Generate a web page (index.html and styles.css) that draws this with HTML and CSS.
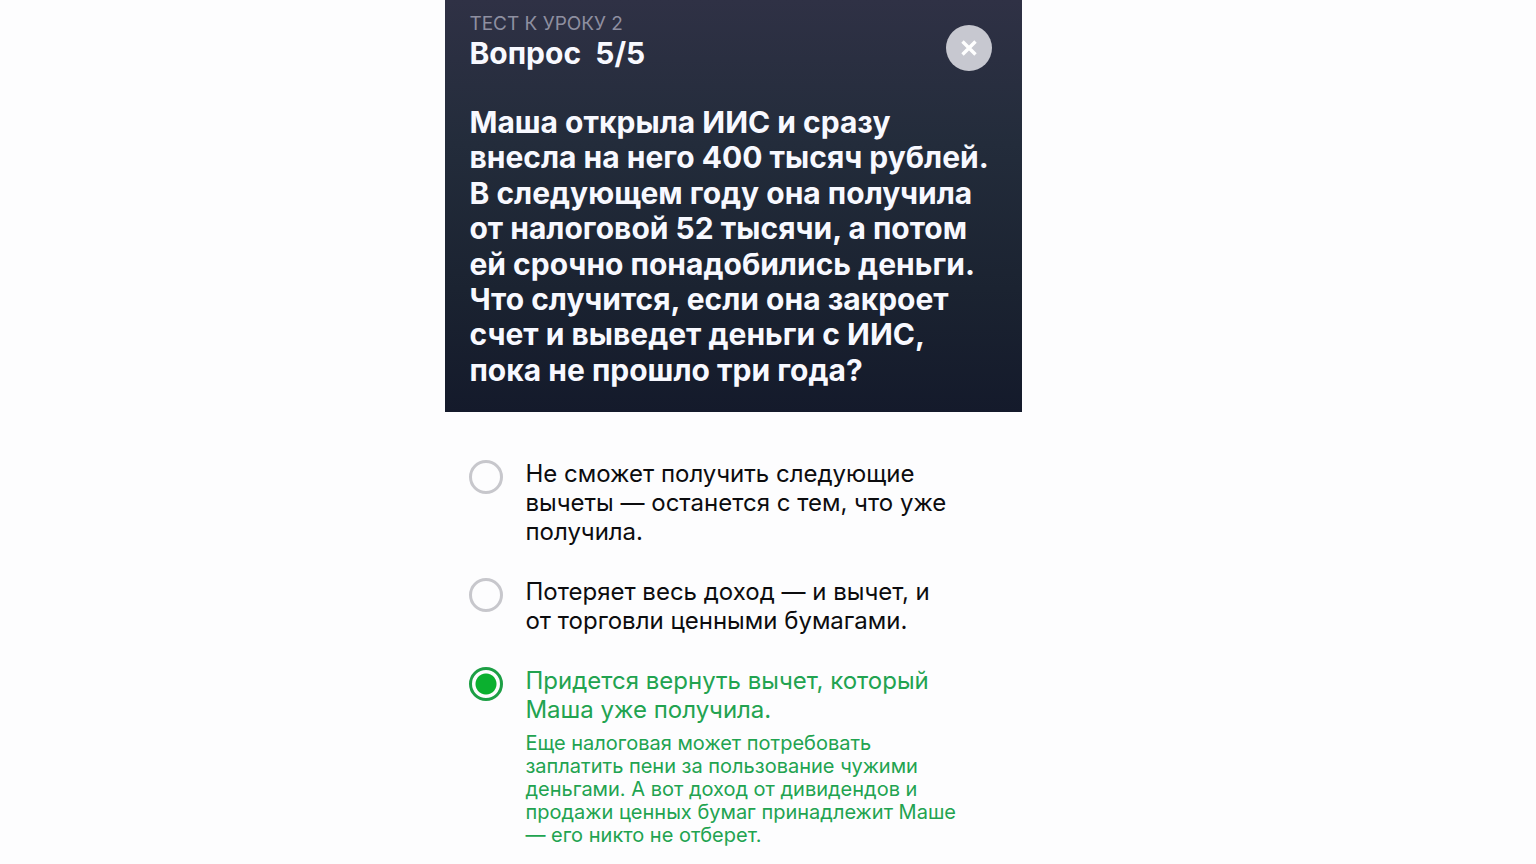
FILE: index.html
```html
<!DOCTYPE html>
<html lang="ru">
<head>
<meta charset="utf-8">
<meta name="viewport" content="width=device-width, initial-scale=1">
<title>Тест к уроку 2</title>
<link rel="stylesheet" href="styles.css">
</head>
<body>
<main class="quiz">
  <header class="quiz-header">
    <div class="topbar">
      <div>
        <p class="lesson">ТЕСТ К УРОКУ 2</p>
        <h1 class="counter">Вопрос&nbsp; 5/5</h1>
      </div>
      <button class="close" type="button" aria-label="Закрыть">
        <svg viewBox="0 0 46 46" width="46" height="46" aria-hidden="true"><path d="M16.5 16.5 29.5 29.5M29.5 16.5 16.5 29.5" fill="none" stroke="#fff" stroke-width="3.4" stroke-linecap="butt"/></svg>
      </button>
    </div>
    <h2 class="question" id="question">Маша открыла ИИС и сразу<br>внесла на него 400 тысяч рублей.<br>В следующем году она получила<br>от налоговой 52 тысячи, а потом<br>ей срочно понадобились деньги.<br>Что случится, если она закроет<br>счет и выведет деньги с ИИС,<br>пока не прошло три года?</h2>
  </header>
  <form class="answers" role="radiogroup" aria-labelledby="question">
    <label class="answer">
      <input class="radio" type="radio" name="answer">
      <span class="text">Не сможет получить следующие<br>вычеты — останется с тем, что уже<br>получила.</span>
    </label>
    <label class="answer">
      <input class="radio" type="radio" name="answer">
      <span class="text">Потеряет весь доход — и вычет, и<br>от торговли ценными бумагами.</span>
    </label>
    <label class="answer correct">
      <input class="radio" type="radio" name="answer" checked>
      <span class="text">Придется вернуть вычет, который<br>Маша уже получила.
        <span class="note">Еще налоговая может потребовать<br>заплатить пени за пользование чужими<br>деньгами. А вот доход от дивидендов и<br>продажи ценных бумаг принадлежит Маше<br>— его никто не отберет.</span>
      </span>
    </label>
  </form>
</main>
</body>
</html>
```
FILE: styles.css
```css
* { box-sizing: border-box; }
body {
  margin: 0;
  background: #fdfdfe;
  color: #0c0c0e;
  font-family: Inter, "Liberation Sans", sans-serif;
}
.quiz {
  max-width: 577px;
  margin-left: 29%;
}
.quiz-header {
  padding: 12px 24px 24px;
  background: linear-gradient(#2f3145, #232c3b 35%, #1b2331 70%, #141a2b);
  color: #f8f9ff;
}
.topbar {
  display: flex;
  justify-content: space-between;
  align-items: flex-end;
  padding-right: 6px;
}
.lesson {
  margin: 0;
  font-size: 19px;
  line-height: 24px;
  color: #8e8fa0;
}
.counter {
  margin: 0;
  font-size: 30px;
  line-height: 35px;
  font-weight: 650;
}
.close {
  width: 46px;
  height: 46px;
  padding: 0;
  border: 0;
  border-radius: 50%;
  background: #c7c8d0;
}
.close svg { display: block; }
.question {
  margin: 34px 0 0;
  font-size: 30px;
  line-height: 1.18;
  font-weight: 650;
  white-space: nowrap;
}
.answers {
  display: flex;
  flex-direction: column;
  gap: 31px;
  padding: 47px 24px 12px;
}
.answer {
  display: flex;
  align-items: flex-start;
  gap: 22px;
}
.radio {
  appearance: none;
  flex: none;
  width: 34px;
  height: 34px;
  margin: 1px 0 0;
  border: 3px solid #c7c7cc;
  border-radius: 50%;
}
.text {
  font-size: 24px;
  line-height: 29px;
  white-space: nowrap;
}
.correct { color: #22a350; }
.correct .radio {
  border-color: #1d9f45;
  background: radial-gradient(circle, #0bb02f 10px, transparent 11px);
}
.note {
  display: block;
  margin-top: 8px;
  font-size: 20px;
  line-height: 23px;
}
```
